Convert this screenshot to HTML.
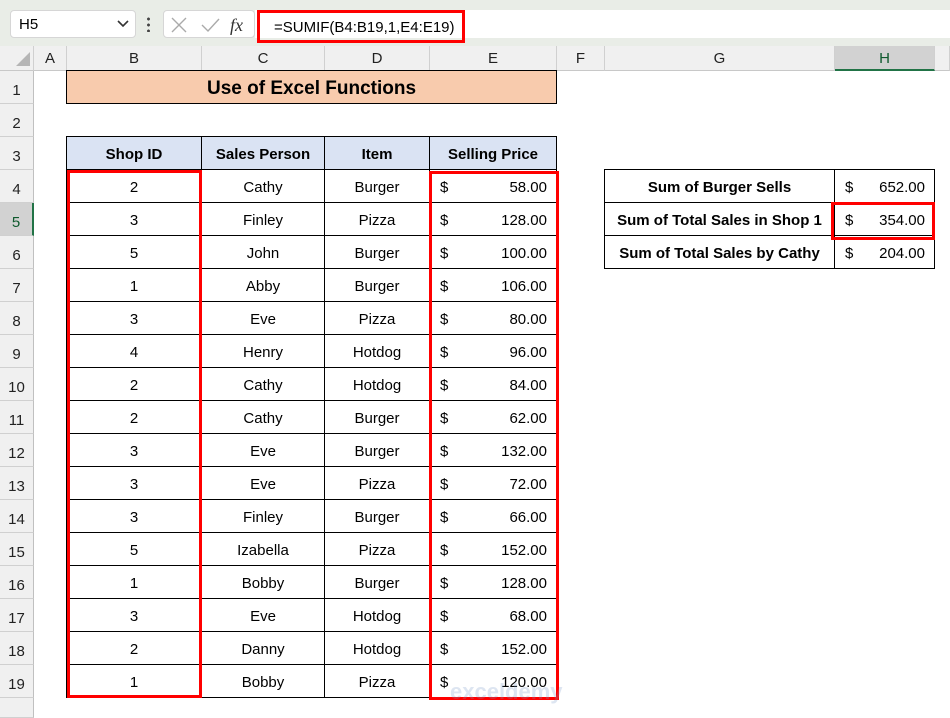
<!DOCTYPE html>
<html><head><meta charset="utf-8"><style>
*{margin:0;padding:0;box-sizing:border-box}
body{width:950px;height:718px;overflow:hidden;background:#fff;font-family:"Liberation Sans",sans-serif;position:relative;color:#000}
.a{position:absolute}
.top{left:0;top:0;width:950px;height:46px;background:#e9ede7}
.nb{left:10px;top:10px;width:126px;height:28px;background:#fff;border:1px solid #d6d6d6;border-radius:4px;font-size:15px;padding:5px 0 0 8px}
.fxb{left:163px;top:10px;width:92px;height:28px;background:#fff;border:1px solid #d6d6d6;border-radius:4px}
.fb{left:255px;top:10px;width:695px;height:28px;background:#fff}
.fred{left:257px;top:10px;width:208px;height:33px;border:3px solid #f00;font-size:15px;padding:6px 0 0 14px}
.hdr{top:46px;height:25px;background:#f0f0f0;border-right:1px solid #d0d0d0;border-bottom:1px solid #c8c8c8;font-size:15px;text-align:center;line-height:25px;color:#222}
.rh{left:0;width:34px;height:33px;background:#f0f0f0;border-bottom:1px solid #d0d0d0;border-right:1px solid #c0c0c0;font-size:15px;text-align:center;padding-top:11px;color:#222}
.c{position:absolute;height:33px;border-right:1px solid #000;border-bottom:1px solid #000;font-size:15px;text-align:center;line-height:35px}
.b{font-weight:bold}
.p{text-align:right;padding-right:9px}
.p span{position:absolute;left:10px}
.red{position:absolute;border:3px solid #f00}
</style></head><body>
<div class="a top"></div>
<div class="a nb">H5<svg class="a" style="left:106px;top:9px" width="12" height="8"><path d="M1 1L6 6L11 1" stroke="#333" stroke-width="1.6" fill="none"/></svg></div>
<div class="a" style="left:147px;top:16px;width:3px;height:16px;background:radial-gradient(circle,#444 1.3px,transparent 1.6px) 0 0/3px 6px"></div>
<div class="a fxb"><svg width="92" height="28"><path d="M8 7L22 21M22 7L8 21" stroke="#aaa" stroke-width="1.4"/><path d="M38 14L44 20L55 8" stroke="#aaa" stroke-width="1.4" fill="none"/><text x="66" y="20" font-family="Liberation Serif" font-style="italic" font-size="18" fill="#333">fx</text></svg></div>
<div class="a fb"></div>
<div class="a fred">=SUMIF(B4:B19,1,E4:E19)</div>

<div class="a hdr" style="left:0;width:34px"><svg width="34" height="24"><path d="M30 6L30 20L16 20Z" fill="#b5b5b5"/></svg></div>
<div class="a hdr" style="left:34px;width:33px">A</div>
<div class="a hdr" style="left:67px;width:135px">B</div>
<div class="a hdr" style="left:202px;width:123px">C</div>
<div class="a hdr" style="left:325px;width:105px">D</div>
<div class="a hdr" style="left:430px;width:127px">E</div>
<div class="a hdr" style="left:557px;width:48px">F</div>
<div class="a hdr" style="left:605px;width:230px">G</div>
<div class="a hdr" style="left:835px;width:100px;background:#d2d2d2;border-bottom:2px solid #217346;color:#0f5a2e">H</div>
<div class="a hdr" style="left:935px;width:15px"></div>

<div class="a rh" style="top:71px">1</div><div class="a rh" style="top:104px">2</div><div class="a rh" style="top:137px">3</div><div class="a rh" style="top:170px">4</div>
<div class="a rh" style="top:203px;background:#d2d2d2;border-right:2px solid #217346;color:#0f5a2e">5</div>
<div class="a rh" style="top:236px">6</div><div class="a rh" style="top:269px">7</div><div class="a rh" style="top:302px">8</div><div class="a rh" style="top:335px">9</div><div class="a rh" style="top:368px">10</div><div class="a rh" style="top:401px">11</div><div class="a rh" style="top:434px">12</div><div class="a rh" style="top:467px">13</div><div class="a rh" style="top:500px">14</div><div class="a rh" style="top:533px">15</div><div class="a rh" style="top:566px">16</div><div class="a rh" style="top:599px">17</div><div class="a rh" style="top:632px">18</div><div class="a rh" style="top:665px">19</div><div class="a rh" style="top:698px;height:20px"></div>

<div class="a b" style="left:66px;top:70px;width:491px;height:34px;background:#f8cbad;border:1px solid #000;font-size:19px;text-align:center;line-height:35px">Use of Excel Functions</div>

<div class="a" style="left:66px;top:136px;width:491px;height:562px;border-left:1px solid #000;border-top:1px solid #000">
<div class="c b" style="left:0;top:0;width:135px;background:#dae3f3">Shop ID</div><div class="c b" style="left:135px;top:0;width:123px;background:#dae3f3">Sales Person</div><div class="c b" style="left:258px;top:0;width:105px;background:#dae3f3">Item</div><div class="c b" style="left:363px;top:0;width:127px;background:#dae3f3">Selling Price</div>
<div class="c" style="left:0;top:33px;width:135px">2</div><div class="c" style="left:135px;top:33px;width:123px">Cathy</div><div class="c" style="left:258px;top:33px;width:105px">Burger</div><div class="c p" style="left:363px;top:33px;width:127px"><span>$</span>58.00</div>
<div class="c" style="left:0;top:66px;width:135px">3</div><div class="c" style="left:135px;top:66px;width:123px">Finley</div><div class="c" style="left:258px;top:66px;width:105px">Pizza</div><div class="c p" style="left:363px;top:66px;width:127px"><span>$</span>128.00</div>
<div class="c" style="left:0;top:99px;width:135px">5</div><div class="c" style="left:135px;top:99px;width:123px">John</div><div class="c" style="left:258px;top:99px;width:105px">Burger</div><div class="c p" style="left:363px;top:99px;width:127px"><span>$</span>100.00</div>
<div class="c" style="left:0;top:132px;width:135px">1</div><div class="c" style="left:135px;top:132px;width:123px">Abby</div><div class="c" style="left:258px;top:132px;width:105px">Burger</div><div class="c p" style="left:363px;top:132px;width:127px"><span>$</span>106.00</div>
<div class="c" style="left:0;top:165px;width:135px">3</div><div class="c" style="left:135px;top:165px;width:123px">Eve</div><div class="c" style="left:258px;top:165px;width:105px">Pizza</div><div class="c p" style="left:363px;top:165px;width:127px"><span>$</span>80.00</div>
<div class="c" style="left:0;top:198px;width:135px">4</div><div class="c" style="left:135px;top:198px;width:123px">Henry</div><div class="c" style="left:258px;top:198px;width:105px">Hotdog</div><div class="c p" style="left:363px;top:198px;width:127px"><span>$</span>96.00</div>
<div class="c" style="left:0;top:231px;width:135px">2</div><div class="c" style="left:135px;top:231px;width:123px">Cathy</div><div class="c" style="left:258px;top:231px;width:105px">Hotdog</div><div class="c p" style="left:363px;top:231px;width:127px"><span>$</span>84.00</div>
<div class="c" style="left:0;top:264px;width:135px">2</div><div class="c" style="left:135px;top:264px;width:123px">Cathy</div><div class="c" style="left:258px;top:264px;width:105px">Burger</div><div class="c p" style="left:363px;top:264px;width:127px"><span>$</span>62.00</div>
<div class="c" style="left:0;top:297px;width:135px">3</div><div class="c" style="left:135px;top:297px;width:123px">Eve</div><div class="c" style="left:258px;top:297px;width:105px">Burger</div><div class="c p" style="left:363px;top:297px;width:127px"><span>$</span>132.00</div>
<div class="c" style="left:0;top:330px;width:135px">3</div><div class="c" style="left:135px;top:330px;width:123px">Eve</div><div class="c" style="left:258px;top:330px;width:105px">Pizza</div><div class="c p" style="left:363px;top:330px;width:127px"><span>$</span>72.00</div>
<div class="c" style="left:0;top:363px;width:135px">3</div><div class="c" style="left:135px;top:363px;width:123px">Finley</div><div class="c" style="left:258px;top:363px;width:105px">Burger</div><div class="c p" style="left:363px;top:363px;width:127px"><span>$</span>66.00</div>
<div class="c" style="left:0;top:396px;width:135px">5</div><div class="c" style="left:135px;top:396px;width:123px">Izabella</div><div class="c" style="left:258px;top:396px;width:105px">Pizza</div><div class="c p" style="left:363px;top:396px;width:127px"><span>$</span>152.00</div>
<div class="c" style="left:0;top:429px;width:135px">1</div><div class="c" style="left:135px;top:429px;width:123px">Bobby</div><div class="c" style="left:258px;top:429px;width:105px">Burger</div><div class="c p" style="left:363px;top:429px;width:127px"><span>$</span>128.00</div>
<div class="c" style="left:0;top:462px;width:135px">3</div><div class="c" style="left:135px;top:462px;width:123px">Eve</div><div class="c" style="left:258px;top:462px;width:105px">Hotdog</div><div class="c p" style="left:363px;top:462px;width:127px"><span>$</span>68.00</div>
<div class="c" style="left:0;top:495px;width:135px">2</div><div class="c" style="left:135px;top:495px;width:123px">Danny</div><div class="c" style="left:258px;top:495px;width:105px">Hotdog</div><div class="c p" style="left:363px;top:495px;width:127px"><span>$</span>152.00</div>
<div class="c" style="left:0;top:528px;width:135px">1</div><div class="c" style="left:135px;top:528px;width:123px">Bobby</div><div class="c" style="left:258px;top:528px;width:105px">Pizza</div><div class="c p" style="left:363px;top:528px;width:127px"><span>$</span>120.00</div>
</div>

<div class="a" style="left:604px;top:169px;width:331px;height:100px;border-left:1px solid #000;border-top:1px solid #000">
<div class="c b" style="left:0;top:0;width:230px">Sum of Burger Sells</div><div class="c p" style="left:230px;top:0;width:100px"><span>$</span>652.00</div>
<div class="c b" style="left:0;top:33px;width:230px">Sum of Total Sales in Shop 1</div><div class="c p" style="left:230px;top:33px;width:100px"><span>$</span>354.00</div>
<div class="c b" style="left:0;top:66px;width:230px">Sum of Total Sales by Cathy</div><div class="c p" style="left:230px;top:66px;width:100px"><span>$</span>204.00</div>
</div>

<div class="red" style="left:67px;top:170px;width:135px;height:528px"></div>
<div class="red" style="left:429px;top:171px;width:130px;height:529px"></div>
<div class="red" style="left:831px;top:202px;width:104px;height:38px"></div>
<div class="a" style="left:450px;top:679px;font-size:22px;font-weight:bold;color:rgba(120,150,200,0.25)">exceldemy</div>
</body></html>
